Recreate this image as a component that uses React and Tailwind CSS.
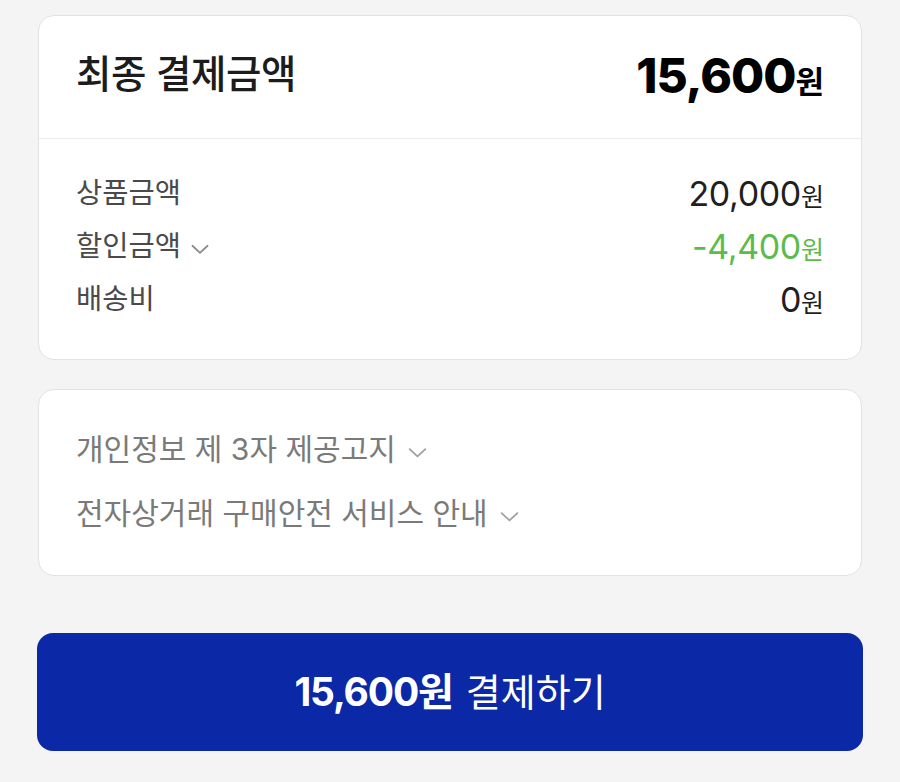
import React from "react";

const font = { fontFamily: '"Inter", "Noto Sans CJK KR", sans-serif' };

function Chevron({ className = "" }) {
  return (
    <svg viewBox="0 0 24 24" className={className} fill="none" stroke="currentColor" strokeWidth="1.6" strokeLinecap="round" strokeLinejoin="round">
      <path d="M5 9l7 6.5L19 9" />
    </svg>
  );
}

function Row({ label, value, chevron, valueClass = "text-[#1f1f1f]" }) {
  return (
    <div className="flex items-center justify-between h-[53px]">
      <div className="flex items-center gap-[6px] text-[28.5px] text-[#4a4a4a]">
        <span>{label}</span>
        {chevron && <Chevron className="w-[26px] h-[26px] text-[#8a8a8a] mt-[4px]" />}
      </div>
      <div className={`flex items-baseline ${valueClass}`}>
        <span className="text-[34px] tracking-[-0.01em]">{value}</span>
        <span className="text-[25px]">원</span>
      </div>
    </div>
  );
}

export default function App() {
  return (
    <div className="min-h-[782px] w-[900px] bg-[#f4f4f4] px-[38px] pt-[15px] pb-[32px]" style={font}>
      <div className="bg-white rounded-[16px] border border-[#e2e2e2]">
        <div className="flex items-center justify-between h-[123px] px-[37px] border-b border-[#ececec]">
          <span className="text-[38.5px] font-medium text-[#1c1c1c] tracking-[-0.01em] -mt-[4px]">최종 결제금액</span>
          <div className="flex items-baseline text-black -mt-[2px]">
            <span className="text-[48px] font-extrabold tracking-[-0.02em]">15,600</span>
            <span className="text-[31px] font-bold">원</span>
          </div>
        </div>
        <div className="px-[37px] pt-[28px] pb-[33px]">
          <Row label="상품금액" value="20,000" />
          <Row label="할인금액" value="-4,400" chevron valueClass="text-[#5cbb4c]" />
          <Row label="배송비" value="0" />
        </div>
      </div>

      <div className="mt-[29px] bg-white rounded-[16px] border border-[#e2e2e2] px-[37px] pt-[27px] pb-[30px]">
        {["개인정보 제 3자 제공고지", "전자상거래 구매안전 서비스 안내"].map((t) => (
          <div key={t} className="flex items-center gap-[8px] h-[64px] text-[30px] text-[#7a7a7a]">
            <span>{t}</span>
            <Chevron className="w-[27px] h-[27px] text-[#a0a0a0] mt-[6px]" />
          </div>
        ))}
      </div>

      <button className="mt-[57px] -mx-[1px] w-[826px] h-[118px] rounded-[16px] bg-[#0b28a7] text-white flex items-center justify-center gap-[13px]">
        <span className="text-[39px] font-bold tracking-[-0.03em]">15,600원</span>
        <span className="text-[38px]">결제하기</span>
      </button>
    </div>
  );
}
